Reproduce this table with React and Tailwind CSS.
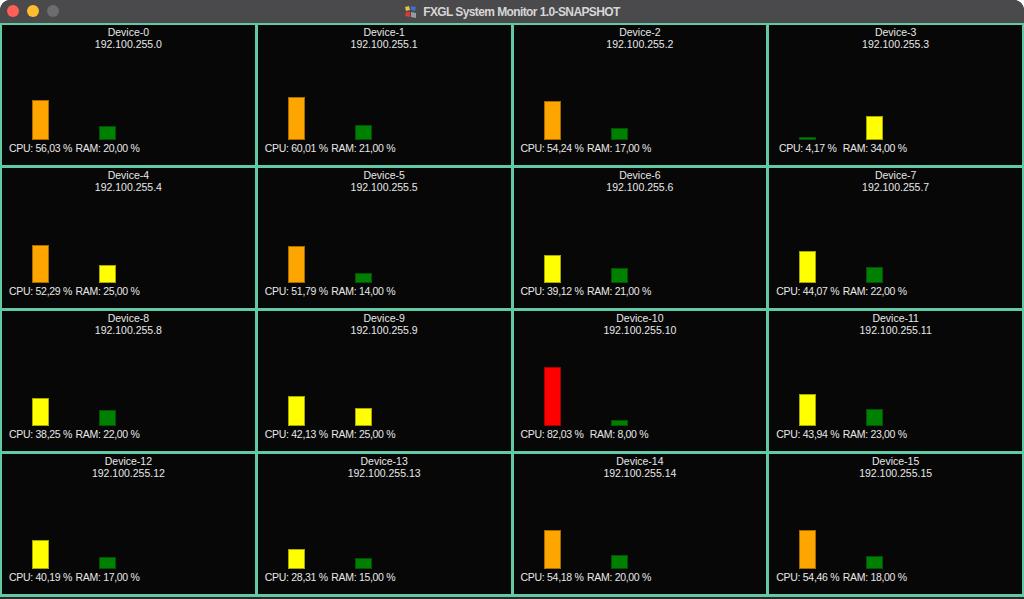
import React from "react";

const devices = [
  [56.03, 20], [60.01, 21], [54.24, 17], [4.17, 34],
  [52.29, 25], [51.79, 14], [39.12, 21], [44.07, 22],
  [38.25, 22], [42.13, 25], [82.03, 8], [43.94, 23],
  [40.19, 17], [28.31, 15], [54.18, 20], [54.46, 18],
];

function colorFor(v) {
  if (v < 25) return "bg-[#008000]";
  if (v < 50) return "bg-[#ffff00]";
  if (v < 80) return "bg-[#ffa500]";
  return "bg-[#ff0000]";
}

const fmt = (v) => v.toFixed(2).replace(".", ",") + " %";

function Bar({ label, value }) {
  return (
    <div className="flex w-[67px] flex-col items-center">
      <div
        className={`w-[17px] border border-black/35 ${colorFor(value)}`}
        style={{ height: Math.max(2, Math.round(value * 0.72)) + "px" }}
      />
      <div className="mt-[2px] whitespace-nowrap text-[10.5px] leading-[12px] tracking-[-0.3px]">
        {label}: {fmt(value)}
      </div>
    </div>
  );
}

function Cell({ i, cpu, ram }) {
  return (
    <div className="flex flex-col bg-[#070707] text-[#e8e8e8]">
      <div className="pt-[1px] text-center text-[10.5px] leading-[12px]">
        <div>Device-{i}</div>
        <div>192.100.255.{i}</div>
      </div>
      <div className="flex-1" />
      <div className="flex items-end pb-[11px] pl-[5px]">
        <Bar label="CPU" value={cpu} />
        <Bar label="RAM" value={ram} />
      </div>
    </div>
  );
}

function Logo() {
  return (
    <svg width="14" height="14" viewBox="0 0 14 14" className="mr-[5px]">
      <path d="M1 2 L5 1 L6 5 L2 6 Z" fill="#e8c33a" />
      <path d="M7 1 L12 2 L11 6 L7 5 Z" fill="#3b6fd8" />
      <path d="M2 7 L6 7 L6 12 L1 11 Z" fill="#d83a3a" />
      <path d="M7 7 L12 8 L12 13 L7 12 Z" fill="#9a9a9a" />
    </svg>
  );
}

export default function App() {
  return (
    <div
      className="h-[599px] w-[1024px] overflow-hidden bg-white"
      style={{ fontFamily: '"Liberation Sans", Arial, sans-serif' }}
    >
      <div className="flex h-full flex-col overflow-hidden rounded-t-[10px] bg-[#2a2a2a]">
        <div className="relative flex h-[23px] items-center justify-center bg-[#4a494c]">
          <div className="absolute left-[7px] top-[5px] flex gap-[8px]">
            <div className="h-[12px] w-[12px] rounded-full bg-[#fe5f57]" />
            <div className="h-[12px] w-[12px] rounded-full bg-[#febc2e]" />
            <div className="h-[12px] w-[12px] rounded-full bg-[#6d6c6f]" />
          </div>
          <Logo />
          <span className="text-[12px] font-bold tracking-[-0.6px] text-[#d6d6d6]">
            FXGL System Monitor 1.0-SNAPSHOT
          </span>
        </div>
        <div className="grid h-[574px] grid-cols-4 grid-rows-4 gap-[3px] bg-[#62c9a5] px-[2px] pb-[3px] pt-[2px]">
          {devices.map(([c, r], i) => (
            <Cell key={i} i={i} cpu={c} ram={r} />
          ))}
        </div>
      </div>
    </div>
  );
}
